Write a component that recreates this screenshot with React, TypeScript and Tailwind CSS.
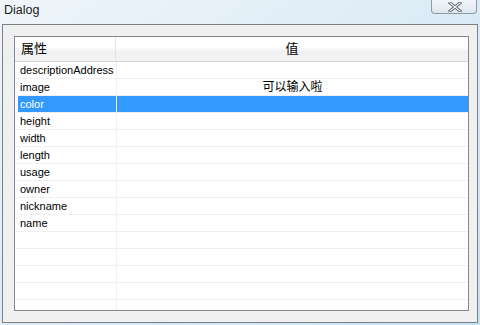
import React from 'react';

const ROWS = [
  { name: 'descriptionAddress', value: '' },
  { name: 'image', value: '可以输入啦' },
  { name: 'color', value: '', selected: true },
  { name: 'height', value: '' },
  { name: 'width', value: '' },
  { name: 'length', value: '' },
  { name: 'usage', value: '' },
  { name: 'owner', value: '' },
  { name: 'nickname', value: '' },
  { name: 'name', value: '' },
  { name: '', value: '' },
  { name: '', value: '' },
  { name: '', value: '' },
  { name: '', value: '' },
  { name: '', value: '' },
];

export default function App() {
  return (
    <div
      className="w-[480px] h-[325px] overflow-hidden flex flex-col bg-gradient-to-br from-[#eef5fa] via-[#dcebf6] to-[#c7e0f2]"
      style={{ fontFamily: '"Liberation Sans", "Noto Sans CJK SC", sans-serif' }}
    >
      {/* Title bar */}
      <div className="h-[24px] flex items-start justify-between pl-[4px] pr-[3px]">
        <span className="text-[12.5px] leading-[14px] mt-[3px] text-[#1b1b1b]">Dialog</span>
        <div className="w-[46px] h-[14px] rounded-b-[4px] border border-t-0 border-[#8f9aa6] bg-gradient-to-b from-[#f4f7fa] to-[#dde6ee] flex items-center justify-center">
          <svg width="14" height="10" viewBox="0 0 14 10" className="ml-[2px]">
            <path d="M2 1 L12 9 M12 1 L2 9" stroke="#5d6670" strokeWidth="3" strokeLinecap="square" />
            <path d="M2 1 L12 9 M12 1 L2 9" stroke="#f4f6f8" strokeWidth="1.2" strokeLinecap="square" />
          </svg>
        </div>
      </div>

      {/* Client area */}
      <div className="mx-[2px] h-[299px] border border-[#7c8188] bg-[#f0f0f0] pt-[11px] pl-[11px] pr-[8px]">
        <div className="h-[275px] border border-[#828790] bg-white overflow-hidden flex flex-col">
          {/* Header */}
          <div className="h-[25px] flex shrink-0 border-b border-[#d5d5d5] bg-gradient-to-b from-white from-40% to-[#f1f2f4] to-60%">
            <div className="w-[101px] border-r border-[#e3e4e6] pl-[6px] flex items-center text-[13px] text-black">
              属性
            </div>
            <div className="flex-1 flex items-center justify-center text-[13px] text-black">值</div>
          </div>
          {/* Rows */}
          {ROWS.map((r, i) => (
            <div key={i} className="h-[17px] flex shrink-0 text-[11px]">
              <div className="w-[3px] shrink-0 border-b border-[#f0f0f0]" />
              <div
                className={`w-[99px] pl-[2px] flex items-center border-r border-b border-[#f0f0f0] ${
                  r.selected ? 'bg-[#3399ff] text-white' : 'text-black'
                }`}
              >
                {r.name}
              </div>
              <div
                className={`flex-1 flex items-center justify-center border-b border-[#f0f0f0] text-[12px] ${
                  r.selected ? 'bg-[#3399ff] text-white' : 'text-black'
                }`}
              >
                {r.value}
              </div>
            </div>
          ))}
        </div>
      </div>
    </div>
  );
}
